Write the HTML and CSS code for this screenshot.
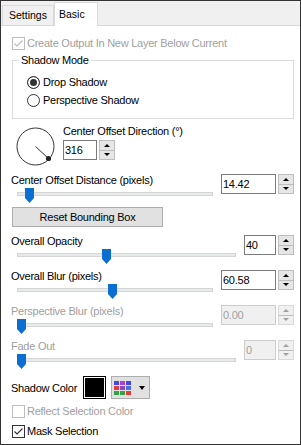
FILE: index.html
```html
<!DOCTYPE html>
<html lang="en">
<head>
  <meta charset="UTF-8" />
  <title>Drop Shadow - Basic</title>
  <link rel="stylesheet" href="styles.css">
</head>
<body>
  <div class="frame">
    <div class="tabs">
      <div class="tab">Settings</div>
      <div class="tab active">Basic</div>
    </div>

    <div class="page">
      <div class="check disabled">
        <span class="box"><svg viewBox="0 0 11 11"><path d="M1.5 5.5 L4 8 L9.5 2.5" /></svg></span>
        Create Output In New Layer Below Current
      </div>

      <fieldset class="group">
        <legend>Shadow Mode</legend>
        <div class="radio"><span class="dot on"></span>Drop Shadow</div>
        <div class="radio"><span class="dot"></span>Perspective Shadow</div>
      </fieldset>

      <!-- Direction dial -->
      <div class="dial-row">
        <svg class="dial" viewBox="0 0 40 40">
          <circle cx="19.5" cy="20.5" r="18.5" fill="none" stroke="#333" stroke-width="1" />
          <line x1="19.5" y1="20.5" x2="32.5" y2="32.5" stroke="#333" stroke-width="1" />
          <circle cx="32.5" cy="32.5" r="2.6" fill="#222" />
        </svg>
        <div class="dial-side">
          <div class="lbl">Center Offset Direction (°)</div>
          <div class="spin small">
            <span class="spin-field">316</span>
            <span class="spin-btns"><span class="up"></span><span class="dn"></span></span>
          </div>
        </div>
      </div>

      <div class="block first">
        <div class="track-col">
          <div class="lbl">Center Offset Distance (pixels)</div>
          <div class="slider"><svg class="thumb" style="left:8px" viewBox="0 0 9 15"><path d="M0 0 H9 V10 L4.5 15 L0 10 Z" /></svg></div>
        </div>
        <div class="spin">
          <span class="spin-field">14.42</span>
          <span class="spin-btns"><span class="up"></span><span class="dn"></span></span>
        </div>
      </div>

      <button class="btn">Reset Bounding Box</button>

      <div class="block after-btn">
        <div class="track-col">
          <div class="lbl">Overall Opacity</div>
          <div class="slider long"><svg class="thumb" style="left:85px" viewBox="0 0 9 15"><path d="M0 0 H9 V10 L4.5 15 L0 10 Z" /></svg></div>
        </div>
        <div class="spin narrow">
          <span class="spin-field">40</span>
          <span class="spin-btns"><span class="up"></span><span class="dn"></span></span>
        </div>
      </div>

      <div class="block">
        <div class="track-col">
          <div class="lbl">Overall Blur (pixels)</div>
          <div class="slider"><svg class="thumb" style="left:91px" viewBox="0 0 9 15"><path d="M0 0 H9 V10 L4.5 15 L0 10 Z" /></svg></div>
        </div>
        <div class="spin">
          <span class="spin-field">60.58</span>
          <span class="spin-btns"><span class="up"></span><span class="dn"></span></span>
        </div>
      </div>

      <div class="block disabled">
        <div class="track-col">
          <div class="lbl">Perspective Blur (pixels)</div>
          <div class="slider"><svg class="thumb" style="left:0px" viewBox="0 0 9 15"><path d="M0 0 H9 V10 L4.5 15 L0 10 Z" /></svg></div>
        </div>
        <div class="spin">
          <span class="spin-field">0.00</span>
          <span class="spin-btns"><span class="up"></span><span class="dn"></span></span>
        </div>
      </div>

      <div class="block disabled">
        <div class="track-col">
          <div class="lbl">Fade Out</div>
          <div class="slider long"><svg class="thumb" style="left:0px" viewBox="0 0 9 15"><path d="M0 0 H9 V10 L4.5 15 L0 10 Z" /></svg></div>
        </div>
        <div class="spin narrow">
          <span class="spin-field">0</span>
          <span class="spin-btns"><span class="up"></span><span class="dn"></span></span>
        </div>
      </div>

      <div class="color-row">
        <span class="lbl">Shadow Color</span>
        <span class="swatch"></span>
        <span class="picker">
          <svg class="grid" viewBox="0 0 17 14">
            <rect x="0" y="0" width="5" height="4" fill="#4646e6" />
            <rect x="6" y="0" width="5" height="4" fill="#b040c8" />
            <rect x="12" y="0" width="5" height="4" fill="#4646e6" />
            <rect x="0" y="5" width="5" height="4" fill="#e03c3c" />
            <rect x="6" y="5" width="5" height="4" fill="#8848c0" />
            <rect x="12" y="5" width="5" height="4" fill="#4a6ee8" />
            <rect x="0" y="10" width="5" height="4" fill="#38a048" />
            <rect x="6" y="10" width="5" height="4" fill="#38a048" />
            <rect x="12" y="10" width="5" height="4" fill="#e03c3c" />
          </svg>
          <span class="caret"></span>
        </span>
      </div>

      <div class="check disabled reflect">
        <span class="box"></span>
        Reflect Selection Color
      </div>
      <div class="check row-gap">
        <span class="box"><svg viewBox="0 0 11 11"><path d="M1.5 5.5 L4 8 L9.5 2.5" /></svg></span>
        Mask Selection
      </div>
    </div>
  </div>
</body>
</html>
```

FILE: styles.css
```css
body { margin: 0; font-family: "Liberation Sans", Arial, sans-serif; font-size: 11px; letter-spacing: -0.25px; color: #000; }
.frame {
  width: 301px; height: 445px; box-sizing: border-box; border: 1px solid #333;
  background: #fff; overflow: hidden;
}

/* tabs */
.tabs {
  display: flex; align-items: flex-end; height: 24px; padding-left: 1px;
  background: #f0f0f0; border-bottom: 1px solid #d9d9d9;
}
.tab {
  height: 19px; padding: 0 6px; border: 1px solid #d9d9d9; border-bottom: none;
  line-height: 19px; font-size: 10.5px; letter-spacing: 0;
}
.tab.active {
  height: 23px; margin-bottom: -1px; padding: 0 12px 0 4px;
  background: #fff; line-height: 22px;
}

.page { padding: 0 6px 0 10px; }
.disabled { color: #a0a0a0; }

/* checkbox + radio */
.check { display: flex; align-items: center; height: 14px; margin-top: 10px; }
.check.row-gap { margin-top: 6px; }
.check.reflect { margin-top: 5px; }
.box {
  width: 11px; height: 11px; border: 1px solid #333; margin: 0 2px 0 1px; flex: none;
}
.box svg { display: block; width: 11px; height: 11px; }
.box path { fill: none; stroke: #333; stroke-width: 1.2; }
.disabled .box { border-color: #bcbcbc; }
.disabled .box path { stroke: #bcbcbc; }

.group {
  margin: 4px 0 0 1px; padding: 6px 6px 9px 6px; border: 1px solid #dcdcdc;
}
.group legend { padding: 0 2px; line-height: 13px; }
.radio { display: flex; align-items: center; height: 18px; padding-left: 8px; }
.dot {
  width: 11px; height: 11px; border: 1px solid #333; border-radius: 50%;
  margin-right: 3px; flex: none;
}
.dot.on { background: #333; box-shadow: inset 0 0 0 2px #fff; }

/* dial */
.dial-row { display: flex; margin-top: 4px; }
.dial { display: block; width: 40px; height: 40px; margin: 3px 0 0 5px; }
.dial-side { margin-left: 7px; padding-top: 1px; }
.dial-side .spin { margin-top: 2px; }
.lbl { line-height: 14px; white-space: nowrap; }

/* spin boxes */
.spin { display: flex; width: 73px; height: 20px; }
.spin.narrow { width: 50px; }
.spin.small { width: 52px; }
.spin-field {
  flex: 1; border: 1px solid #7a7a7a; padding-left: 1px; line-height: 18px; background: #fff;
}
.spin-btns {
  width: 14px; margin-left: 2px; display: flex; flex-direction: column;
  border: 1px solid #bdbdbd;
}
.spin-btns span {
  flex: 1; display: flex; align-items: center; justify-content: center; background: #e6e6e6;
}
.spin-btns .dn { border-top: 1px solid #bdbdbd; }
.spin-btns .up::before {
  content: ""; border-left: 3px solid transparent; border-right: 3px solid transparent;
  border-bottom: 3px solid #000;
}
.spin-btns .dn::before {
  content: ""; border-left: 3px solid transparent; border-right: 3px solid transparent;
  border-top: 3px solid #000;
}
.disabled .spin-field { background: #f0f0f0; border-color: #cccccc; }
.disabled .spin-btns { border-color: #d9d9d9; }
.disabled .spin-btns span { background: #f0f0f0; }
.disabled .spin-btns .up::before { border-bottom-color: #a0a0a0; }
.disabled .spin-btns .dn::before { border-top-color: #a0a0a0; }

/* slider blocks */
.block { display: flex; justify-content: space-between; align-items: flex-start; margin-top: 5px; }
.block.first { margin-top: 7px; }
.block.after-btn { margin-top: 7px; }
.block .spin { margin-top: 1px; }
.slider {
  position: relative; width: 196px; height: 15px; box-sizing: border-box;
  margin: 1px 0 0 6px; padding-top: 4px;
}
.slider.long { width: 219px; }
.slider::before {
  content: ""; display: block; height: 2px;
  background: #e7eaea; border: 1px solid #d6d6d6;
}
.thumb { position: absolute; top: 0; width: 9px; height: 15px; display: block; }
.thumb path { fill: #0a6fd0; }

.btn {
  display: block; width: 151px; height: 20px; margin: 4px 0 0 1px; padding: 0;
  background: #e1e1e1; border: 1px solid #adadad;
  font: inherit; letter-spacing: inherit; color: #000;
}

/* shadow color */
.color-row { display: flex; align-items: center; height: 23px; margin-top: 7px; }
.color-row .lbl { width: 72px; }
.swatch {
  width: 21px; height: 21px; border: 1px solid #000; background: #000;
  box-shadow: inset 0 0 0 1px #fff;
}
.picker {
  display: flex; align-items: center; width: 37px; height: 21px; margin-left: 5px;
  background: #e1e1e1; border: 1px solid #adadad;
}
.grid { display: block; width: 17px; height: 14px; margin-left: 2px; }
.caret {
  margin-left: 8px; border-left: 3.5px solid transparent; border-right: 3.5px solid transparent;
  border-top: 4px solid #000;
}
```
